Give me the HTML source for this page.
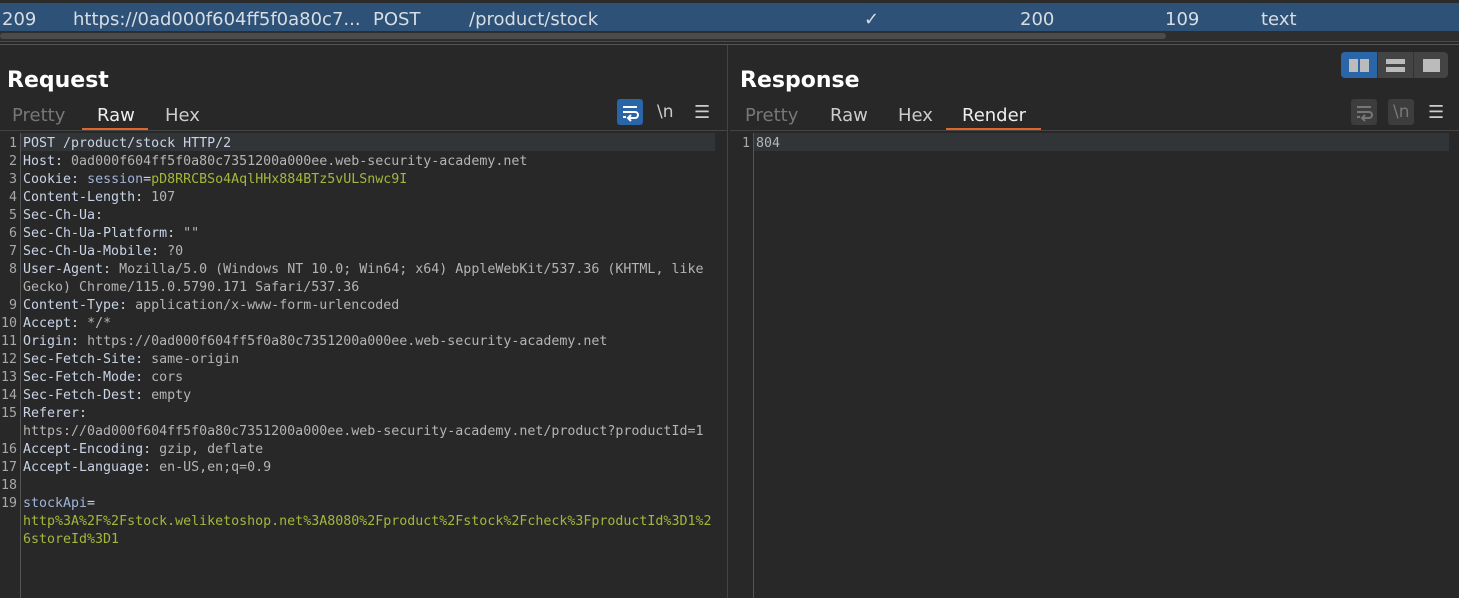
<!DOCTYPE html>
<html><head><meta charset="utf-8"><style>
body{margin:0;width:1459px;height:598px;background:#282828;overflow:hidden;position:relative;font-family:"DejaVu Sans","Liberation Sans",sans-serif;color:#ddd}
.a{position:absolute}
.row{top:3px;left:0;width:1459px;height:28px;background:#2d5177;font-size:18px;color:#d8dde3;line-height:28px}
.row span{position:absolute;top:3px}
.h{font-size:22px;font-weight:bold;color:#fff}
.tab{font-size:18px;top:105px}
.code{font-family:"DejaVu Sans Mono","Liberation Mono",monospace;font-size:13.3px;line-height:18px;white-space:pre}
.k{color:#c9d3e6}.v{color:#b4b4b4}.g{color:#a2b83a}.s{color:#9fb3db}
.ln{color:#a8a8a8;text-align:right;width:17px}
</style></head><body>
<div class="a" style="top:0;left:0;width:1459px;height:3px;background:#2b2b2b"></div>
<div class="a row">
<span style="left:2px">209</span><span style="left:73px">https://0ad000f604ff5f0a80c7...</span><span style="left:373px">POST</span><span style="left:469px">/product/stock</span><span style="left:864px">✓</span><span style="left:1020px">200</span><span style="left:1165px">109</span><span style="left:1261px">text</span>
</div>
<div class="a" style="top:31px;left:0;width:1459px;height:10px;background:#2e2e2e"></div>
<div class="a" style="top:33px;left:0;width:1166px;height:6px;background:#4b4b4b;border-radius:3px"></div>
<div class="a" style="top:41px;left:0;width:1459px;height:1px;background:#33506e"></div>
<div class="a" style="top:44px;left:0;width:1459px;height:1px;background:#555"></div>
<div class="a" style="top:45px;left:727px;width:1px;height:553px;background:#444"></div>

<div class="a h" style="left:7px;top:68px">Request</div>
<div class="a tab" style="left:12px;color:#777">Pretty</div>
<div class="a tab" style="left:97px;color:#eee">Raw</div>
<div class="a tab" style="left:165px;color:#ccc">Hex</div>
<div class="a" style="left:82px;top:128px;width:66px;height:2px;background:#e0672b"></div>
<div class="a" style="left:0;top:130px;width:727px;height:1px;background:#444"></div>
<div class="a" style="left:617px;top:99px;width:26px;height:26px;background:#2a65a8;border-radius:3px"></div>
<svg class="a" style="left:617px;top:99px" width="26" height="26"><g stroke="#fff" stroke-width="2" fill="none"><path d="M6 8h14M6 13h12a3 3 0 0 1 0 6h-6M6 18h3M14 16l-3 3 3 3"/></g></svg>
<div class="a" style="left:657px;top:102px;font-size:17px;color:#ccc">\n</div>
<div class="a" style="left:694px;top:102px;font-size:18px;color:#ccc">☰</div>

<div class="a" style="left:21px;top:133px;width:694px;height:18px;background:#323538"></div>
<div class="a" style="left:20px;top:133px;width:1px;height:465px;background:#555"></div>
<div class="a code ln" style="left:0;top:135px;width:17px">1
2
3
4
5
6
7
8

9
10
11
12
13
14
15

16
17
18
19</div>
<div class="a code" style="left:23px;top:135px"><span class="k">POST /product/stock HTTP/2</span>
<span class="k">Host:</span> <span class="v">0ad000f604ff5f0a80c7351200a000ee.web-security-academy.net</span>
<span class="k">Cookie:</span> <span class="s">session</span><span class="k">=</span><span class="g">pD8RRCBSo4AqlHHx884BTz5vULSnwc9I</span>
<span class="k">Content-Length:</span> <span class="v">107</span>
<span class="k">Sec-Ch-Ua:</span>
<span class="k">Sec-Ch-Ua-Platform:</span> <span class="v">""</span>
<span class="k">Sec-Ch-Ua-Mobile:</span> <span class="v">?0</span>
<span class="k">User-Agent:</span> <span class="v">Mozilla/5.0 (Windows NT 10.0; Win64; x64) AppleWebKit/537.36 (KHTML, like</span>
<span class="v">Gecko) Chrome/115.0.5790.171 Safari/537.36</span>
<span class="k">Content-Type:</span> <span class="v">application/x-www-form-urlencoded</span>
<span class="k">Accept:</span> <span class="v">*/*</span>
<span class="k">Origin:</span> <span class="v">https://0ad000f604ff5f0a80c7351200a000ee.web-security-academy.net</span>
<span class="k">Sec-Fetch-Site:</span> <span class="v">same-origin</span>
<span class="k">Sec-Fetch-Mode:</span> <span class="v">cors</span>
<span class="k">Sec-Fetch-Dest:</span> <span class="v">empty</span>
<span class="k">Referer:</span>
<span class="v">https://0ad000f604ff5f0a80c7351200a000ee.web-security-academy.net/product?productId=1</span>
<span class="k">Accept-Encoding:</span> <span class="v">gzip, deflate</span>
<span class="k">Accept-Language:</span> <span class="v">en-US,en;q=0.9</span>

<span class="s">stockApi</span><span class="k">=</span>
<span class="g">http%3A%2F%2Fstock.weliketoshop.net%3A8080%2Fproduct%2Fstock%2Fcheck%3FproductId%3D1%2</span>
<span class="g">6storeId%3D1</span></div>

<div class="a h" style="left:740px;top:68px">Response</div>
<div class="a tab" style="left:745px;color:#777">Pretty</div>
<div class="a tab" style="left:830px;color:#ccc">Raw</div>
<div class="a tab" style="left:898px;color:#ccc">Hex</div>
<div class="a tab" style="left:962px;color:#eee">Render</div>
<div class="a" style="left:946px;top:128px;width:95px;height:2px;background:#e0672b"></div>
<div class="a" style="left:730px;top:130px;width:729px;height:1px;background:#444"></div>
<div class="a" style="left:1351px;top:99px;width:26px;height:26px;background:#3d3d3d;border-radius:3px"></div>
<svg class="a" style="left:1351px;top:99px" width="26" height="26"><g stroke="#777" stroke-width="2" fill="none"><path d="M6 8h14M6 13h12a3 3 0 0 1 0 6h-6M6 18h3M14 16l-3 3 3 3"/></g></svg>
<div class="a" style="left:1388px;top:99px;width:26px;height:26px;background:#3d3d3d;border-radius:3px"></div>
<div class="a" style="left:1393px;top:102px;font-size:17px;color:#777">\n</div>
<div class="a" style="left:1428px;top:102px;font-size:18px;color:#ccc">☰</div>
<div class="a" style="left:1341px;top:52px;width:107px;height:26px;background:#444;border-radius:4px;overflow:hidden">
<div class="a" style="left:0;top:0;width:36px;height:26px;background:#2a65a8"></div>
<div class="a" style="left:36px;top:0;width:1px;height:26px;background:#333"></div>
<div class="a" style="left:72px;top:0;width:1px;height:26px;background:#333"></div>
<div class="a" style="left:8px;top:7px;width:9px;height:13px;background:#bbb"></div>
<div class="a" style="left:19px;top:7px;width:9px;height:13px;background:#bbb"></div>
<div class="a" style="left:45px;top:7px;width:19px;height:5px;background:#bbb"></div>
<div class="a" style="left:45px;top:15px;width:19px;height:5px;background:#bbb"></div>
<div class="a" style="left:82px;top:7px;width:17px;height:13px;background:#bbb"></div>
</div>
<div class="a" style="left:754px;top:133px;width:695px;height:18px;background:#323538"></div>
<div class="a" style="left:753px;top:133px;width:1px;height:465px;background:#555"></div>
<div class="a code ln" style="left:733px;top:135px">1</div>
<div class="a code v" style="left:756px;top:135px">804</div>
</body></html>
